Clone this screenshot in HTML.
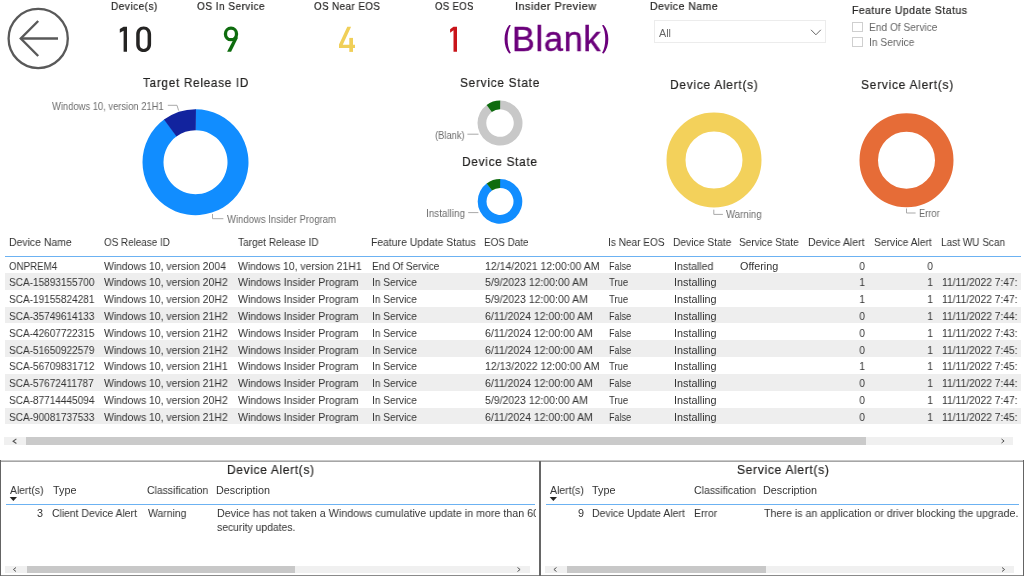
<!DOCTYPE html>
<html><head><meta charset="utf-8"><style>
html,body{margin:0;padding:0;background:#fff;-webkit-font-smoothing:antialiased;width:1024px;height:582px;overflow:hidden;position:relative;font-family:"Liberation Sans",sans-serif}
.t{position:absolute;white-space:pre;transform-origin:0 0;will-change:transform}
.tb{font-size:10.8px;line-height:10.8px;color:#333333;transform:scaleX(0.945)}
.tb.r{transform-origin:100% 0}
svg{position:absolute;left:0;top:0}
</style></head><body>
<div style="position:absolute;left:5px;top:272.97px;width:1015.5px;height:16.819999999999993px;background:#eeeeee;"></div><div style="position:absolute;left:5px;top:306.61px;width:1015.5px;height:16.819999999999993px;background:#eeeeee;"></div><div style="position:absolute;left:5px;top:340.25px;width:1015.5px;height:16.819999999999993px;background:#eeeeee;"></div><div style="position:absolute;left:5px;top:373.89px;width:1015.5px;height:16.819999999999993px;background:#eeeeee;"></div><div style="position:absolute;left:5px;top:407.53px;width:1015.5px;height:16.82000000000005px;background:#eeeeee;"></div><div style="position:absolute;left:5px;top:256px;width:1015.5px;height:1px;background:#6cb2f2;"></div><div style="position:absolute;left:4.2px;top:437.1px;width:1009.0999999999999px;height:7.599999999999966px;background:#f0f0f0;"></div><div style="position:absolute;left:25.9px;top:437.1px;width:839.7px;height:7.599999999999966px;background:#cacaca;"></div><div style="position:absolute;left:654px;top:20px;width:172px;height:22.6px;box-sizing:border-box;border:1px solid #ececec"></div><div style="position:absolute;left:852.2px;top:21.6px;width:10.6px;height:10.1px;box-sizing:border-box;border:1px solid #cfcfcf"></div><div style="position:absolute;left:852.2px;top:36.7px;width:10.6px;height:10.1px;box-sizing:border-box;border:1px solid #cfcfcf"></div><div style="position:absolute;left:0px;top:460px;width:1024px;height:1px;background:#c8c8c8;"></div><div style="position:absolute;left:0px;top:461px;width:1024px;height:1px;background:#a6a6a6;"></div><div style="position:absolute;left:0px;top:575px;width:1024px;height:1px;background:#8a8a8a;"></div><div style="position:absolute;left:0px;top:460px;width:1.2px;height:116px;background:#646464;"></div><div style="position:absolute;left:539px;top:461px;width:2px;height:115px;background:#666666;"></div><div style="position:absolute;left:1022.8px;top:460px;width:1.2000000000000455px;height:116px;background:#646464;"></div><div style="position:absolute;left:5.8px;top:504px;width:529.5px;height:1px;background:#6cb2f2;"></div><div style="position:absolute;left:545.9px;top:504px;width:473.1px;height:1px;background:#6cb2f2;"></div><div style="position:absolute;left:5.3px;top:566px;width:524.5px;height:6.7999999999999545px;background:#f0f0f0;"></div><div style="position:absolute;left:26.6px;top:566px;width:268.7px;height:6.7999999999999545px;background:#c8c8c8;"></div><div style="position:absolute;left:545.1px;top:566px;width:468.9px;height:6.7999999999999545px;background:#f0f0f0;"></div><div style="position:absolute;left:566.5px;top:566px;width:199.39999999999998px;height:6.7999999999999545px;background:#c8c8c8;"></div>
<svg width="1024" height="582" viewBox="0 0 1024 582">
<path d="M195.500,109.200 A53,53 0 1 1 164.347,119.322 L176.691,136.311 A32,32 0 1 0 195.500,130.200 Z" fill="#118dff"/>
<path d="M163.974,119.596 A53,53 0 0 1 195.963,109.202 L195.779,130.201 A32,32 0 0 0 176.466,136.477 Z" fill="#12239e"/>
<path d="M500.000,100.600 A22.5,22.5 0 1 1 486.775,104.897 L491.918,111.976 A13.75,13.75 0 1 0 500.000,109.350 Z" fill="#c8c8c8"/>
<path d="M486.616,105.013 A22.5,22.5 0 0 1 500.196,100.601 L500.120,109.351 A13.75,13.75 0 0 0 491.821,112.047 Z" fill="#0e6b0e"/>
<path d="M500.000,179.100 A22.3,22.3 0 1 1 486.892,183.359 L492.065,190.478 A13.5,13.5 0 1 0 500.000,187.900 Z" fill="#118dff"/>
<path d="M486.735,183.474 A22.3,22.3 0 0 1 500.195,179.101 L500.118,187.901 A13.5,13.5 0 0 0 491.970,190.548 Z" fill="#0e6b0e"/>
<circle cx="714" cy="160" r="38.0" fill="none" stroke="#f3d15b" stroke-width="19.0"/>
<circle cx="906.5" cy="160.2" r="37.75" fill="none" stroke="#e66c37" stroke-width="18.5"/>
<polyline points="167.8,105.3 177,105.3 178.6,110.5" fill="none" stroke="#a9a9a9" stroke-width="1"/>
<polyline points="212.5,214 212.5,218.7 223.4,218.7" fill="none" stroke="#a9a9a9" stroke-width="1"/>
<polyline points="467.4,134.2 478.5,134.2" fill="none" stroke="#a9a9a9" stroke-width="1"/>
<polyline points="468.2,212.6 478.4,212.6" fill="none" stroke="#a9a9a9" stroke-width="1"/>
<polyline points="713.8,209.7 713.8,214.4 722.9,214.4" fill="none" stroke="#a9a9a9" stroke-width="1"/>
<polyline points="906.5,208.5 906.5,213 915.6,213" fill="none" stroke="#a9a9a9" stroke-width="1"/>
<circle cx="38.2" cy="38.5" r="29.6" fill="none" stroke="#595959" stroke-width="2.3"/>
<polyline points="38.2,21 20.8,38.5 38.2,56" fill="none" stroke="#595959" stroke-width="2.4"/>
<line x1="20.8" y1="38.5" x2="58" y2="38.5" stroke="#595959" stroke-width="2.4"/>
<path d="M453.5,26.7 L457,26.7 L457,51.85 L453.5,51.85 L453.5,30.3 L450.1,32.7 L450.1,29.15 Z" fill="#c9141a"/>
<path d="M123.6,26.8 L127,26.8 L127,51.8 L123.6,51.8 L123.6,30.7 L119.8,32.8 L119.8,29 Z" fill="#252423"/>
<path fill-rule="evenodd" d="M143.65,26.4 C148,26.4 151.1,29.6 151.1,34.2 L151.1,44.3 C151.1,48.9 148,52.1 143.65,52.1 C139.3,52.1 136.2,48.9 136.2,44.3 L136.2,34.2 C136.2,29.6 139.3,26.4 143.65,26.4 Z M143.65,29.6 C141.3,29.6 139.7,31.3 139.7,34.2 L139.7,44.3 C139.7,47.2 141.3,48.9 143.65,48.9 C146,48.9 147.6,47.2 147.6,44.3 L147.6,34.2 C147.6,31.3 146,29.6 143.65,29.6 Z" fill="#252423"/>
<ellipse cx="231" cy="33.9" rx="5.55" ry="5.8" fill="none" stroke="#0e6c0e" stroke-width="3.3"/>
<path d="M234.6,37.2 L238.1,37.6 L231.1,51.8 L227.1,51.8 Z" fill="#0e6c0e"/>
<path d="M347.3,26.8 L351.1,26.8 L342.8,44.8 L355,44.8 L355,48 L339,48 L339,44.4 Z" fill="#f0cf58"/>
<rect x="349.3" y="37.9" width="3.7" height="14" fill="#f0cf58"/>
<path d="M509.2,24.9 L510.9,25.3 C506.5,31.5 506.5,46.7 510.9,53 L509.2,53.4 C503,46.5 503,31.8 509.2,24.9 Z" fill="#6b007b"/>
<path d="M603.7,24.9 L602,25.3 C606.4,31.5 606.4,46.7 602,53 L603.7,53.4 C609.9,46.5 609.9,31.8 603.7,24.9 Z" fill="#6b007b"/>
<polyline points="811,29.8 815.9,34.8 820.8,29.8" fill="none" stroke="#666" stroke-width="1"/>
<path d="M9.7,497 L17,497 L13.35,500.9 Z" fill="#252423"/>
<path d="M549.7,497 L557,497 L553.35,500.9 Z" fill="#252423"/>
<polyline points="16.4,438.9 13.1,441.2 16.4,443.5" fill="none" stroke="#555" stroke-width="1.1"/>
<polyline points="1001.5,439 1004.1,441 1001.5,443" fill="none" stroke="#555" stroke-width="1"/>
<polyline points="16,567.5 13.4,569.5 16,571.5" fill="none" stroke="#555" stroke-width="1"/>
<polyline points="517.5,567.5 520.1,569.5 517.5,571.5" fill="none" stroke="#555" stroke-width="1"/>
<polyline points="556.5,567.5 553.9,569.5 556.5,571.5" fill="none" stroke="#555" stroke-width="1"/>
<polyline points="1002,567.5 1004.6,569.5 1002,571.5" fill="none" stroke="#555" stroke-width="1"/>
</svg>
<div style="position:absolute;left:0;top:0;width:1020.5px;height:582px;overflow:hidden">
<div class="t" style="left:110.89px;top:0.72px;font-size:11.2px;line-height:11.2px;color:#252423;transform:scaleX(0.9034);-webkit-text-stroke:0.2px #252423;letter-spacing:0.5px">Device(s)</div>
<div class="t" style="left:196.55px;top:0.72px;font-size:11.2px;line-height:11.2px;color:#252423;transform:scaleX(0.9008);-webkit-text-stroke:0.2px #252423;letter-spacing:0.5px">OS In Service</div>
<div class="t" style="left:313.96px;top:0.72px;font-size:11.2px;line-height:11.2px;color:#252423;transform:scaleX(0.8748);-webkit-text-stroke:0.2px #252423;letter-spacing:0.5px">OS Near EOS</div>
<div class="t" style="left:435.18px;top:0.72px;font-size:11.2px;line-height:11.2px;color:#252423;transform:scaleX(0.8446);-webkit-text-stroke:0.2px #252423;letter-spacing:0.5px">OS EOS</div>
<div class="t" style="left:515.33px;top:0.72px;font-size:11.2px;line-height:11.2px;color:#252423;transform:scaleX(0.9697);-webkit-text-stroke:0.2px #252423;letter-spacing:0.5px">Insider Preview</div>
<div class="t" style="left:511.81px;top:21.75px;font-size:35.5px;line-height:35.5px;color:#6b007b;transform:scaleX(0.9618);-webkit-text-stroke:0.5px #6b007b;letter-spacing:0.8px">Blank</div>
<div class="t" style="left:649.83px;top:1.06px;font-size:10.8px;line-height:10.8px;color:#252423;transform:scaleX(0.9693);-webkit-text-stroke:0.2px #252423;letter-spacing:0.5px">Device Name</div>
<div class="t" style="left:659.00px;top:27.96px;font-size:10.8px;line-height:10.8px;color:#666666;transform:scaleX(1.0000);-webkit-text-stroke:0px #666666;letter-spacing:0px">All</div>
<div class="t" style="left:851.63px;top:5.26px;font-size:10.8px;line-height:10.8px;color:#252423;transform:scaleX(0.9689);-webkit-text-stroke:0.2px #252423;letter-spacing:0.5px">Feature Update Status</div>
<div class="t" style="left:868.85px;top:21.66px;font-size:10.8px;line-height:10.8px;color:#666666;transform:scaleX(0.9425);-webkit-text-stroke:0px #666666;letter-spacing:0px">End Of Service</div>
<div class="t" style="left:868.75px;top:36.66px;font-size:10.8px;line-height:10.8px;color:#666666;transform:scaleX(0.9453);-webkit-text-stroke:0px #666666;letter-spacing:0px">In Service</div>
<div class="t" style="left:143.04px;top:76.49px;font-size:13.6px;line-height:13.6px;color:#252423;transform:scaleX(0.8666);-webkit-text-stroke:0.2px #252423;letter-spacing:0.8px">Target Release ID</div>
<div class="t" style="left:459.77px;top:76.39px;font-size:13.6px;line-height:13.6px;color:#252423;transform:scaleX(0.8768);-webkit-text-stroke:0.2px #252423;letter-spacing:0.8px">Service State</div>
<div class="t" style="left:461.84px;top:154.69px;font-size:13.6px;line-height:13.6px;color:#252423;transform:scaleX(0.8741);-webkit-text-stroke:0.2px #252423;letter-spacing:0.8px">Device State</div>
<div class="t" style="left:669.63px;top:77.79px;font-size:13.6px;line-height:13.6px;color:#252423;transform:scaleX(0.8811);-webkit-text-stroke:0.2px #252423;letter-spacing:0.8px">Device Alert(s)</div>
<div class="t" style="left:860.67px;top:77.79px;font-size:13.6px;line-height:13.6px;color:#252423;transform:scaleX(0.8850);-webkit-text-stroke:0.2px #252423;letter-spacing:0.8px">Service Alert(s)</div>
<div class="t" style="left:52.41px;top:100.53px;font-size:10.6px;line-height:10.6px;color:#6e6e6e;transform:scaleX(0.8865);-webkit-text-stroke:0px #6e6e6e;letter-spacing:0px">Windows 10, version 21H1</div>
<div class="t" style="left:227.21px;top:213.83px;font-size:10.6px;line-height:10.6px;color:#6e6e6e;transform:scaleX(0.8980);-webkit-text-stroke:0px #6e6e6e;letter-spacing:0px">Windows Insider Program</div>
<div class="t" style="left:435.27px;top:129.53px;font-size:10.6px;line-height:10.6px;color:#6e6e6e;transform:scaleX(0.8824);-webkit-text-stroke:0px #6e6e6e;letter-spacing:0px">(Blank)</div>
<div class="t" style="left:425.67px;top:208.33px;font-size:10.6px;line-height:10.6px;color:#6e6e6e;transform:scaleX(0.9328);-webkit-text-stroke:0px #6e6e6e;letter-spacing:0px">Installing</div>
<div class="t" style="left:726.41px;top:208.73px;font-size:10.6px;line-height:10.6px;color:#6e6e6e;transform:scaleX(0.9112);-webkit-text-stroke:0px #6e6e6e;letter-spacing:0px">Warning</div>
<div class="t" style="left:919.01px;top:207.63px;font-size:10.6px;line-height:10.6px;color:#6e6e6e;transform:scaleX(0.8800);-webkit-text-stroke:0px #6e6e6e;letter-spacing:0px">Error</div>
<div class="t" style="left:8.53px;top:237.16px;font-size:10.8px;line-height:10.8px;color:#333333;transform:scaleX(0.9685);-webkit-text-stroke:0px #333333;letter-spacing:0px">Device Name</div>
<div class="t" style="left:103.84px;top:237.16px;font-size:10.8px;line-height:10.8px;color:#333333;transform:scaleX(0.9141);-webkit-text-stroke:0px #333333;letter-spacing:0px">OS Release ID</div>
<div class="t" style="left:237.61px;top:237.16px;font-size:10.8px;line-height:10.8px;color:#333333;transform:scaleX(0.9335);-webkit-text-stroke:0px #333333;letter-spacing:0px">Target Release ID</div>
<div class="t" style="left:370.73px;top:237.16px;font-size:10.8px;line-height:10.8px;color:#333333;transform:scaleX(0.9646);-webkit-text-stroke:0px #333333;letter-spacing:0px">Feature Update Status</div>
<div class="t" style="left:483.67px;top:237.16px;font-size:10.8px;line-height:10.8px;color:#333333;transform:scaleX(0.9175);-webkit-text-stroke:0px #333333;letter-spacing:0px">EOS Date</div>
<div class="t" style="left:608.27px;top:237.16px;font-size:10.8px;line-height:10.8px;color:#333333;transform:scaleX(0.9323);-webkit-text-stroke:0px #333333;letter-spacing:0px">Is Near EOS</div>
<div class="t" style="left:672.84px;top:237.16px;font-size:10.8px;line-height:10.8px;color:#333333;transform:scaleX(0.9533);-webkit-text-stroke:0px #333333;letter-spacing:0px">Device State</div>
<div class="t" style="left:739.44px;top:237.16px;font-size:10.8px;line-height:10.8px;color:#333333;transform:scaleX(0.9289);-webkit-text-stroke:0px #333333;letter-spacing:0px">Service State</div>
<div class="t" style="left:807.61px;top:237.16px;font-size:10.8px;line-height:10.8px;color:#333333;transform:scaleX(0.9843);-webkit-text-stroke:0px #333333;letter-spacing:0px">Device Alert</div>
<div class="t" style="left:873.92px;top:237.16px;font-size:10.8px;line-height:10.8px;color:#333333;transform:scaleX(0.9539);-webkit-text-stroke:0px #333333;letter-spacing:0px">Service Alert</div>
<div class="t" style="left:940.96px;top:237.16px;font-size:10.8px;line-height:10.8px;color:#333333;transform:scaleX(0.9288);-webkit-text-stroke:0px #333333;letter-spacing:0px">Last WU Scan</div>
<div class="t" style="left:227.05px;top:463.83px;font-size:12.6px;line-height:12.6px;color:#252423;transform:scaleX(0.9492);-webkit-text-stroke:0.2px #252423;letter-spacing:0.7px">Device Alert(s)</div>
<div class="t" style="left:737.03px;top:464.13px;font-size:12.6px;line-height:12.6px;color:#252423;transform:scaleX(0.9580);-webkit-text-stroke:0.2px #252423;letter-spacing:0.7px">Service Alert(s)</div>
<div class="t" style="left:9.50px;top:484.86px;font-size:10.8px;line-height:10.8px;color:#333333;transform:scaleX(0.9618);-webkit-text-stroke:0px #333333;letter-spacing:0px">Alert(s)</div>
<div class="t" style="left:52.70px;top:484.86px;font-size:10.8px;line-height:10.8px;color:#333333;transform:scaleX(1.0000);-webkit-text-stroke:0px #333333;letter-spacing:0px">Type</div>
<div class="t" style="left:147.12px;top:484.86px;font-size:10.8px;line-height:10.8px;color:#333333;transform:scaleX(0.9631);-webkit-text-stroke:0px #333333;letter-spacing:0px">Classification</div>
<div class="t" style="left:216.40px;top:484.86px;font-size:10.8px;line-height:10.8px;color:#333333;transform:scaleX(1.0000);-webkit-text-stroke:0px #333333;letter-spacing:0px">Description</div>
<div class="t" style="left:549.50px;top:484.86px;font-size:10.8px;line-height:10.8px;color:#333333;transform:scaleX(0.9735);-webkit-text-stroke:0px #333333;letter-spacing:0px">Alert(s)</div>
<div class="t" style="left:591.90px;top:484.86px;font-size:10.8px;line-height:10.8px;color:#333333;transform:scaleX(1.0000);-webkit-text-stroke:0px #333333;letter-spacing:0px">Type</div>
<div class="t" style="left:693.91px;top:484.86px;font-size:10.8px;line-height:10.8px;color:#333333;transform:scaleX(0.9760);-webkit-text-stroke:0px #333333;letter-spacing:0px">Classification</div>
<div class="t" style="left:763.30px;top:484.86px;font-size:10.8px;line-height:10.8px;color:#333333;transform:scaleX(1.0000);-webkit-text-stroke:0px #333333;letter-spacing:0px">Description</div>
<div class="t tb" style="left:9.40px;top:260.51px;transform:scaleX(0.899)">ONPREM4</div>
<div class="t tb" style="left:104.30px;top:260.51px;transform:scaleX(0.963)">Windows 10, version 2004</div>
<div class="t tb" style="left:237.80px;top:260.51px;transform:scaleX(0.963)">Windows 10, version 21H1</div>
<div class="t tb" style="left:371.60px;top:260.51px;transform:scaleX(0.927)">End Of Service</div>
<div class="t tb" style="left:484.50px;top:260.51px;transform:scaleX(0.973)">12/14/2021 12:00:00 AM</div>
<div class="t tb" style="left:609.20px;top:260.51px;transform:scaleX(0.833)">False</div>
<div class="t tb" style="left:673.70px;top:260.51px;transform:scaleX(0.979)">Installed</div>
<div class="t tb" style="left:739.90px;top:260.51px;transform:scaleX(1.0)">Offering</div>
<div class="t tb r" style="right:155.00px;top:260.51px">0</div>
<div class="t tb r" style="right:87.30px;top:260.51px">0</div>
<div class="t tb" style="left:9.40px;top:277.33px;transform:scaleX(0.931)">SCA-15893155700</div>
<div class="t tb" style="left:104.30px;top:277.33px;transform:scaleX(0.963)">Windows 10, version 20H2</div>
<div class="t tb" style="left:237.80px;top:277.33px;transform:scaleX(0.976)">Windows Insider Program</div>
<div class="t tb" style="left:371.60px;top:277.33px;transform:scaleX(0.936)">In Service</div>
<div class="t tb" style="left:484.50px;top:277.33px;transform:scaleX(0.973)">5/9/2023 12:00:00 AM</div>
<div class="t tb" style="left:609.20px;top:277.33px;transform:scaleX(0.881)">True</div>
<div class="t tb" style="left:673.70px;top:277.33px;transform:scaleX(0.997)">Installing</div>
<div class="t tb r" style="right:155.00px;top:277.33px">1</div>
<div class="t tb r" style="right:87.30px;top:277.33px">1</div>
<div class="t tb" style="left:941.80px;top:277.33px;transform:scaleX(0.95)">11/11/2022 7:47:</div>
<div class="t tb" style="left:9.40px;top:294.15px;transform:scaleX(0.931)">SCA-19155824281</div>
<div class="t tb" style="left:104.30px;top:294.15px;transform:scaleX(0.963)">Windows 10, version 20H2</div>
<div class="t tb" style="left:237.80px;top:294.15px;transform:scaleX(0.976)">Windows Insider Program</div>
<div class="t tb" style="left:371.60px;top:294.15px;transform:scaleX(0.936)">In Service</div>
<div class="t tb" style="left:484.50px;top:294.15px;transform:scaleX(0.973)">5/9/2023 12:00:00 AM</div>
<div class="t tb" style="left:609.20px;top:294.15px;transform:scaleX(0.881)">True</div>
<div class="t tb" style="left:673.70px;top:294.15px;transform:scaleX(0.997)">Installing</div>
<div class="t tb r" style="right:155.00px;top:294.15px">1</div>
<div class="t tb r" style="right:87.30px;top:294.15px">1</div>
<div class="t tb" style="left:941.80px;top:294.15px;transform:scaleX(0.95)">11/11/2022 7:47:</div>
<div class="t tb" style="left:9.40px;top:310.97px;transform:scaleX(0.931)">SCA-35749614133</div>
<div class="t tb" style="left:104.30px;top:310.97px;transform:scaleX(0.963)">Windows 10, version 21H2</div>
<div class="t tb" style="left:237.80px;top:310.97px;transform:scaleX(0.976)">Windows Insider Program</div>
<div class="t tb" style="left:371.60px;top:310.97px;transform:scaleX(0.936)">In Service</div>
<div class="t tb" style="left:484.50px;top:310.97px;transform:scaleX(0.973)">6/11/2024 12:00:00 AM</div>
<div class="t tb" style="left:609.20px;top:310.97px;transform:scaleX(0.833)">False</div>
<div class="t tb" style="left:673.70px;top:310.97px;transform:scaleX(0.997)">Installing</div>
<div class="t tb r" style="right:155.00px;top:310.97px">0</div>
<div class="t tb r" style="right:87.30px;top:310.97px">1</div>
<div class="t tb" style="left:941.80px;top:310.97px;transform:scaleX(0.95)">11/11/2022 7:44:</div>
<div class="t tb" style="left:9.40px;top:327.79px;transform:scaleX(0.931)">SCA-42607722315</div>
<div class="t tb" style="left:104.30px;top:327.79px;transform:scaleX(0.963)">Windows 10, version 21H2</div>
<div class="t tb" style="left:237.80px;top:327.79px;transform:scaleX(0.976)">Windows Insider Program</div>
<div class="t tb" style="left:371.60px;top:327.79px;transform:scaleX(0.936)">In Service</div>
<div class="t tb" style="left:484.50px;top:327.79px;transform:scaleX(0.973)">6/11/2024 12:00:00 AM</div>
<div class="t tb" style="left:609.20px;top:327.79px;transform:scaleX(0.833)">False</div>
<div class="t tb" style="left:673.70px;top:327.79px;transform:scaleX(0.997)">Installing</div>
<div class="t tb r" style="right:155.00px;top:327.79px">0</div>
<div class="t tb r" style="right:87.30px;top:327.79px">1</div>
<div class="t tb" style="left:941.80px;top:327.79px;transform:scaleX(0.95)">11/11/2022 7:43:</div>
<div class="t tb" style="left:9.40px;top:344.61px;transform:scaleX(0.931)">SCA-51650922579</div>
<div class="t tb" style="left:104.30px;top:344.61px;transform:scaleX(0.963)">Windows 10, version 21H2</div>
<div class="t tb" style="left:237.80px;top:344.61px;transform:scaleX(0.976)">Windows Insider Program</div>
<div class="t tb" style="left:371.60px;top:344.61px;transform:scaleX(0.936)">In Service</div>
<div class="t tb" style="left:484.50px;top:344.61px;transform:scaleX(0.973)">6/11/2024 12:00:00 AM</div>
<div class="t tb" style="left:609.20px;top:344.61px;transform:scaleX(0.833)">False</div>
<div class="t tb" style="left:673.70px;top:344.61px;transform:scaleX(0.997)">Installing</div>
<div class="t tb r" style="right:155.00px;top:344.61px">0</div>
<div class="t tb r" style="right:87.30px;top:344.61px">1</div>
<div class="t tb" style="left:941.80px;top:344.61px;transform:scaleX(0.95)">11/11/2022 7:45:</div>
<div class="t tb" style="left:9.40px;top:361.43px;transform:scaleX(0.931)">SCA-56709831712</div>
<div class="t tb" style="left:104.30px;top:361.43px;transform:scaleX(0.963)">Windows 10, version 21H1</div>
<div class="t tb" style="left:237.80px;top:361.43px;transform:scaleX(0.976)">Windows Insider Program</div>
<div class="t tb" style="left:371.60px;top:361.43px;transform:scaleX(0.936)">In Service</div>
<div class="t tb" style="left:484.50px;top:361.43px;transform:scaleX(0.973)">12/13/2022 12:00:00 AM</div>
<div class="t tb" style="left:609.20px;top:361.43px;transform:scaleX(0.881)">True</div>
<div class="t tb" style="left:673.70px;top:361.43px;transform:scaleX(0.997)">Installing</div>
<div class="t tb r" style="right:155.00px;top:361.43px">1</div>
<div class="t tb r" style="right:87.30px;top:361.43px">1</div>
<div class="t tb" style="left:941.80px;top:361.43px;transform:scaleX(0.95)">11/11/2022 7:45:</div>
<div class="t tb" style="left:9.40px;top:378.25px;transform:scaleX(0.931)">SCA-57672411787</div>
<div class="t tb" style="left:104.30px;top:378.25px;transform:scaleX(0.963)">Windows 10, version 21H2</div>
<div class="t tb" style="left:237.80px;top:378.25px;transform:scaleX(0.976)">Windows Insider Program</div>
<div class="t tb" style="left:371.60px;top:378.25px;transform:scaleX(0.936)">In Service</div>
<div class="t tb" style="left:484.50px;top:378.25px;transform:scaleX(0.973)">6/11/2024 12:00:00 AM</div>
<div class="t tb" style="left:609.20px;top:378.25px;transform:scaleX(0.833)">False</div>
<div class="t tb" style="left:673.70px;top:378.25px;transform:scaleX(0.997)">Installing</div>
<div class="t tb r" style="right:155.00px;top:378.25px">0</div>
<div class="t tb r" style="right:87.30px;top:378.25px">1</div>
<div class="t tb" style="left:941.80px;top:378.25px;transform:scaleX(0.95)">11/11/2022 7:44:</div>
<div class="t tb" style="left:9.40px;top:395.07px;transform:scaleX(0.931)">SCA-87714445094</div>
<div class="t tb" style="left:104.30px;top:395.07px;transform:scaleX(0.963)">Windows 10, version 20H2</div>
<div class="t tb" style="left:237.80px;top:395.07px;transform:scaleX(0.976)">Windows Insider Program</div>
<div class="t tb" style="left:371.60px;top:395.07px;transform:scaleX(0.936)">In Service</div>
<div class="t tb" style="left:484.50px;top:395.07px;transform:scaleX(0.973)">5/9/2023 12:00:00 AM</div>
<div class="t tb" style="left:609.20px;top:395.07px;transform:scaleX(0.881)">True</div>
<div class="t tb" style="left:673.70px;top:395.07px;transform:scaleX(0.997)">Installing</div>
<div class="t tb r" style="right:155.00px;top:395.07px">0</div>
<div class="t tb r" style="right:87.30px;top:395.07px">1</div>
<div class="t tb" style="left:941.80px;top:395.07px;transform:scaleX(0.95)">11/11/2022 7:47:</div>
<div class="t tb" style="left:9.40px;top:411.89px;transform:scaleX(0.931)">SCA-90081737533</div>
<div class="t tb" style="left:104.30px;top:411.89px;transform:scaleX(0.963)">Windows 10, version 21H2</div>
<div class="t tb" style="left:237.80px;top:411.89px;transform:scaleX(0.976)">Windows Insider Program</div>
<div class="t tb" style="left:371.60px;top:411.89px;transform:scaleX(0.936)">In Service</div>
<div class="t tb" style="left:484.50px;top:411.89px;transform:scaleX(0.973)">6/11/2024 12:00:00 AM</div>
<div class="t tb" style="left:609.20px;top:411.89px;transform:scaleX(0.833)">False</div>
<div class="t tb" style="left:673.70px;top:411.89px;transform:scaleX(0.997)">Installing</div>
<div class="t tb r" style="right:155.00px;top:411.89px">0</div>
<div class="t tb r" style="right:87.30px;top:411.89px">1</div>
<div class="t tb" style="left:941.80px;top:411.89px;transform:scaleX(0.95)">11/11/2022 7:45:</div>
</div>
<div class="t tb r" style="right:980.70px;top:507.66px;transform:scaleX(1);">3</div>
<div class="t tb" style="left:52.2px;top:507.66px;transform:scaleX(0.963);">Client Device Alert</div>
<div class="t tb" style="left:147.6px;top:507.66px;transform:scaleX(0.965);">Warning</div>
<div style="position:absolute;left:0;top:0;width:535.7px;height:582px;overflow:hidden"><div class="t tb" style="left:217.3px;top:507.66px;transform:scaleX(0.99);">Device has not taken a Windows cumulative update in more than 60 days, and is missing</div><div class="t tb" style="left:217.3px;top:521.66px;transform:scaleX(0.96);">security updates.</div></div>
<div class="t tb r" style="right:440.30px;top:507.66px;transform:scaleX(1);">9</div>
<div class="t tb" style="left:592.1px;top:507.66px;transform:scaleX(0.973);">Device Update Alert</div>
<div class="t tb" style="left:694.4px;top:507.66px;transform:scaleX(0.965);">Error</div>
<div class="t tb" style="left:764.2px;top:507.66px;transform:scaleX(0.988);">There is an application or driver blocking the upgrade.</div>
</body></html>
